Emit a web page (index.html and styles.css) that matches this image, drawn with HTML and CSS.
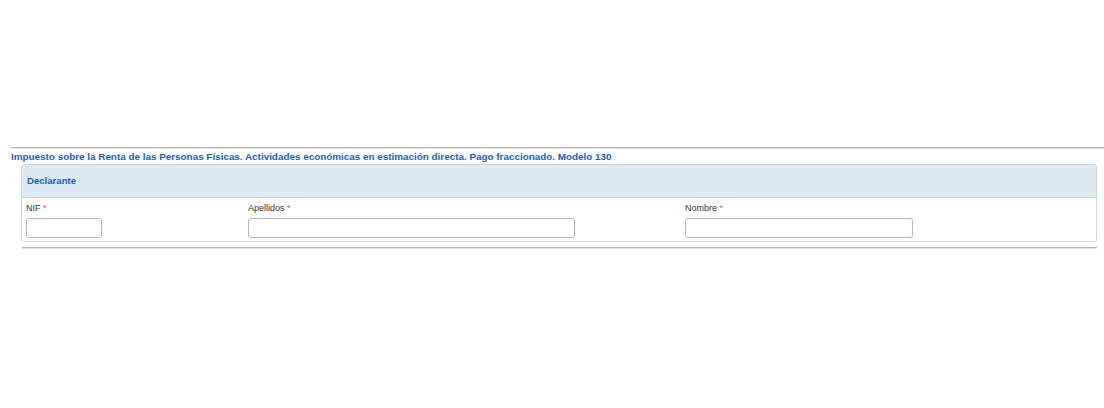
FILE: index.html
```html
<!DOCTYPE html>
<html lang="es">
<head>
<meta charset="utf-8">
<title>Modelo 130</title>
<link rel="stylesheet" href="styles.css">
</head>
<body>
<div class="page">
  <div class="rule-top"></div>
  <h1 class="title">Impuesto sobre la Renta de las Personas Físicas. Actividades económicas en estimación directa. Pago fraccionado. Modelo 130</h1>
  <section class="panel">
    <div class="panel-head">Declarante</div>
    <div class="panel-body">
      <div class="field">
        <label class="label">NIF <span class="req">*</span></label>
        <input class="input w-nif" type="text">
      </div>
      <div class="field">
        <label class="label">Apellidos <span class="req">*</span></label>
        <input class="input w-ape" type="text">
      </div>
      <div class="field">
        <label class="label">Nombre <span class="req">*</span></label>
        <input class="input w-nom" type="text">
      </div>
    </div>
  </section>
  <div class="rule-bottom"></div>
</div>
</body>
</html>
```
FILE: styles.css
```css
html, body {
  margin: 0;
  padding: 0;
  background: #ffffff;
}
.page {
  padding-top: 147px;
  font-family: "Liberation Sans", Arial, sans-serif;
}
.rule-top {
  margin-left: 11px;
  border-top: 1px solid #b9b9b9;
  border-bottom: 1px solid #e4e4e4;
}
.title {
  margin: 2px 0 0 11px;
  font-size: 9.9px;
  line-height: 12px;
  font-weight: bold;
  color: #1b5cc0;
}
.panel {
  margin: 1px 7px 0 21px;
  border: 1px solid #d3d3d3;
  border-radius: 3px;
  overflow: hidden;
}
.panel-head {
  height: 32px;
  line-height: 32px;
  padding-left: 5px;
  background: #dfebf4;
  border-bottom: 1px solid #cfd7dd;
  font-size: 9.6px;
  font-weight: bold;
  color: #1b5cc0;
}
.panel-body {
  display: grid;
  grid-template-columns: 222px 437px 1fr;
  padding: 5px 4px 3px 4px;
}
.field {
  display: flex;
  flex-direction: column;
  align-items: flex-start;
}
.label {
  font-size: 9px;
  line-height: 11px;
  color: #333333;
  margin-bottom: 4px;
}
.req {
  color: #d9534f;
}
.input {
  box-sizing: border-box;
  height: 20px;
  margin: 0;
  padding: 0 4px;
  border: 1px solid #b4b4b4;
  border-radius: 3px;
  background: #ffffff;
}
.w-nif { width: 76px; }
.w-ape { width: 327px; }
.w-nom { width: 228px; }
.rule-bottom {
  margin: 5px 7px 0 22px;
  border-top: 1px solid #b9b9b9;
  border-bottom: 1px solid #e4e4e4;
}
```
